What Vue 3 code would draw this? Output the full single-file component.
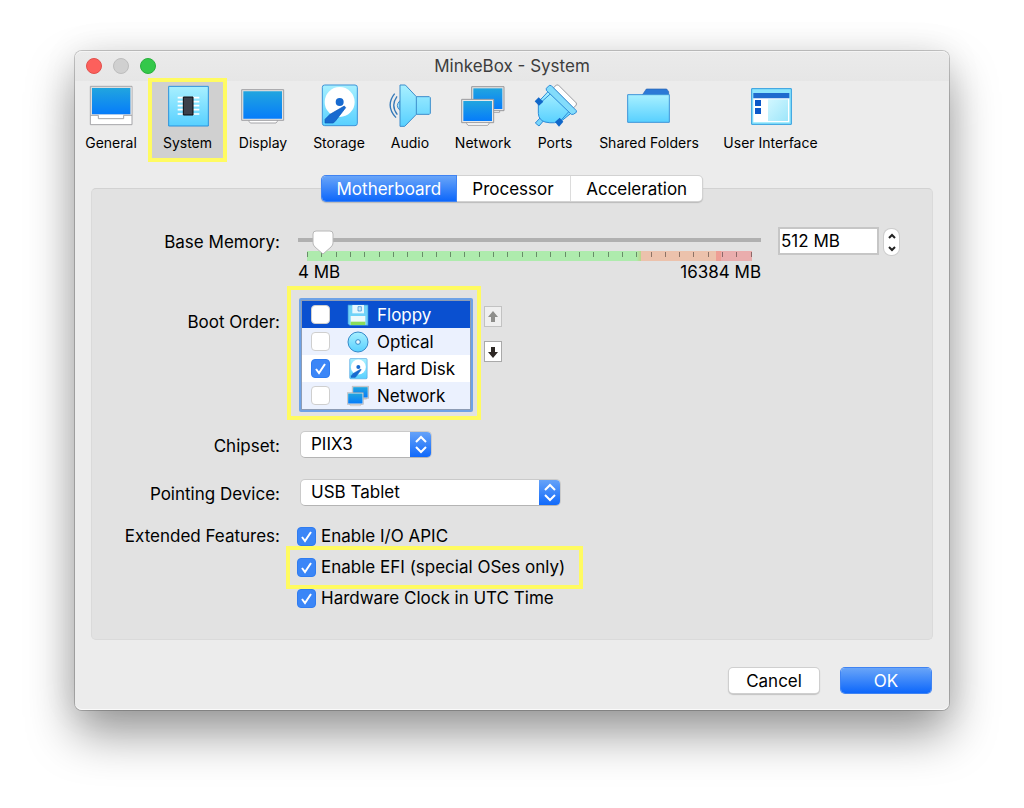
<script setup>
import { ref } from 'vue'

const sections = [
  { id: 'general', label: 'General' },
  { id: 'system', label: 'System' },
  { id: 'display', label: 'Display' },
  { id: 'storage', label: 'Storage' },
  { id: 'audio', label: 'Audio' },
  { id: 'network', label: 'Network' },
  { id: 'ports', label: 'Ports' },
  { id: 'folders', label: 'Shared Folders' },
  { id: 'interface', label: 'User Interface' },
]
const section = ref('system')

const tabs = ['Motherboard', 'Processor', 'Acceleration']
const tab = ref('Motherboard')

const memory = ref(512)
const bootOrder = ref([
  { id: 'floppy', label: 'Floppy', on: false },
  { id: 'optical', label: 'Optical', on: false },
  { id: 'storage', label: 'Hard Disk', on: true },
  { id: 'network', label: 'Network', on: false },
])
const selected = ref('floppy')
const chipset = ref('PIIX3')
const pointing = ref('USB Tablet')
const features = ref([
  { id: 'apic', label: 'Enable I/O APIC', on: true },
  { id: 'efi', label: 'Enable EFI (special OSes only)', on: true },
  { id: 'utc', label: 'Hardware Clock in UTC Time', on: true },
])
</script>

<template>
  <svg class="sprite" aria-hidden="true">
    <defs>
      <linearGradient id="screen" x1="0" y1="0" x2="0" y2="1">
        <stop offset="0" stop-color="#21a5df" /><stop offset="1" stop-color="#067cfa" />
      </linearGradient>
      <linearGradient id="ice" x1="0" y1="0" x2="0" y2="1">
        <stop offset="0" stop-color="#a8f0ff" /><stop offset="1" stop-color="#58d0ff" />
      </linearGradient>
      <linearGradient id="pale" x1="0" y1="0" x2="1" y2="1">
        <stop offset="0" stop-color="#d2f7ff" /><stop offset="1" stop-color="#9ee6fa" />
      </linearGradient>
    </defs>
    <symbol id="i-general" viewBox="0 0 132 132">
      <path d="M4 7H129V122H4Z" fill="#fff" stroke="#a4a4a8" stroke-width="3" />
      <path d="M6 9H127V92H6Z" fill="#dedede" />
      <path d="M9 12H124V91H9Z" fill="url(#screen)" />
      <path d="M4 94H28V104H104V94H129" fill="none" stroke="#a4a4a8" stroke-width="3" />
    </symbol>
    <symbol id="i-system" viewBox="0 0 132 132">
      <path d="M8 7H127V126H8Z" fill="url(#ice)" stroke="#2b92dc" stroke-width="3" />
      <path d="M35 41H100M35 53H100M35 65H100M35 77H100M35 90H100" stroke="#fff" stroke-width="5" />
      <path d="M52 39H81V93H52Z" fill="#3c414b" stroke="#090b10" stroke-width="3" />
    </symbol>
    <symbol id="i-display" viewBox="0 0 132 132">
      <path d="M24 106H109V112L105 117H28L24 112Z" fill="#fff" stroke="#a4a4a8" stroke-width="3" />
      <path d="M2 17H128V109H2Z" fill="#e2e2e2" stroke="#a0a0a4" stroke-width="3" />
      <path d="M7 22H123V104H7Z" fill="url(#screen)" />
    </symbol>
    <symbol id="i-storage" viewBox="0 0 132 132">
      <rect x="16" y="3" width="105" height="122" rx="7" fill="url(#ice)" stroke="#3c93d8" stroke-width="3" />
      <circle cx="68" cy="54" r="45" fill="#fff" />
      <circle cx="68" cy="54" r="12" fill="#176ad0" />
      <path d="M82 66L86 71L56 110L49 117H24V106L39 91Z" fill="#176ad0" stroke="#0e57b8" stroke-width="2" />
    </symbol>
    <symbol id="i-audio" viewBox="0 0 132 132">
      <path d="M20 29Q-9 65 24 101M27 37Q7 65 28 92" fill="none" stroke="#3579b8" stroke-width="4" />
      <path d="M36 50Q20 65 36 79Z" fill="#a6e6fb" stroke="#3b8bcd" stroke-width="3" />
      <path d="M36 3H52L85 38H124L127 41V88L124 91H85L50 127H36Z" fill="url(#ice)" stroke="#3c8dcc" stroke-width="3" />
      <path d="M85 38V91" stroke="#3c8dcc" stroke-width="3" />
    </symbol>
    <symbol id="i-network" viewBox="0 0 132 132">
      <path d="M60 78H116V85H60Z" fill="#fff" stroke="#a4a4a8" stroke-width="3" />
      <path d="M32 8H129V80H32Z" fill="#e2e2e2" stroke="#98989c" stroke-width="3" />
      <path d="M37 13H124V75H37Z" fill="url(#screen)" />
      <path d="M17 113H84V119L80 124H21L17 119Z" fill="#fff" stroke="#a4a4a8" stroke-width="3" />
      <path d="M2 46H98V116H2Z" fill="#e8e8e8" stroke="#98989c" stroke-width="3" />
      <path d="M7 51H93V111H7Z" fill="url(#screen)" />
    </symbol>
    <symbol id="i-ports" viewBox="0 0 132 132">
      <path d="M61 12L70 3H76L130 57V63L121 72Z" fill="#fff" stroke="#9a9ca0" stroke-width="3" />
      <path d="M22 101L31 111L18 126L7 117Z" fill="#7ad6fb" stroke="#2c8bd8" stroke-width="3" />
      <path d="M46 22L16 54V88Q17 108 36 114Q66 121 88 109L116 86Z" fill="url(#ice)" stroke="#2c8bd8" stroke-width="3" />
      <path d="M53 29L25 54M110 80L84 109" fill="none" stroke="#2c8bd8" stroke-width="3" />
      <path d="M5 52L17 40L31 53L18 65Z" fill="#1167c9" />
      <path d="M66 114L80 101L91 113L78 128Z" fill="#1167c9" />
      <path d="M40 13L49 4L55 5L130 80V85L121 91H115L40 19Z" fill="#83dcfb" stroke="#2c8bd8" stroke-width="3" />
    </symbol>
    <symbol id="i-folders" viewBox="0 0 132 132">
      <path d="M46 33L58 15H119L125 23V33Z" fill="#2c79d6" stroke="#2864b4" stroke-width="2" />
      <path d="M2 32H127V115H2Z" fill="url(#ice)" stroke="#3d95d9" stroke-width="3" />
    </symbol>
    <symbol id="i-interface" viewBox="0 0 132 132">
      <path d="M8 14H127V121H8Z" fill="#8ce6fd" stroke="#2b9cdf" stroke-width="3" />
      <path d="M13 42H121V115H13Z" fill="#fff" />
      <path d="M13 27H121V43H13Z" fill="#1f6bce" />
      <path d="M18 48H36V66H18ZM18 72H36V90H18Z" fill="#0b58c8" />
      <path d="M57 46H117V111H57Z" fill="url(#pale)" />
    </symbol>
    <symbol id="i-floppy" viewBox="0 0 66 66">
      <path d="M3 3H63V64H8L3 59Z" fill="#70d3f8" stroke="#3a8fd8" stroke-width="2" />
      <path d="M16 3H51V28H16Z" fill="#e6f7fd" />
      <path d="M33 8H43V21H33Z" fill="#c5e8fb" stroke="#3188d3" stroke-width="2" />
      <path d="M11 36H55V63H11Z" fill="#eef9fb" />
      <path d="M11 53H55V63H11Z" fill="#8ade5b" />
    </symbol>
    <symbol id="i-optical" viewBox="0 0 66 66">
      <circle cx="33" cy="33" r="30" fill="url(#ice)" stroke="#3589c9" stroke-width="3" />
      <circle cx="33" cy="33" r="7" fill="#eaf9ff" stroke="#3589c9" stroke-width="3" />
    </symbol>
  </svg>

  <main class="stage">
    <div class="window">
      <header class="titlebar">
        <div class="lights">
          <button class="light red" aria-label="Close"></button>
          <button class="light gray" aria-label="Minimize" disabled></button>
          <button class="light green" aria-label="Zoom"></button>
        </div>
        <h1>MinkeBox - System</h1>
      </header>

      <nav class="toolbar">
        <button
          v-for="s in sections"
          :key="s.id"
          class="tool"
          :class="[s.id, { active: section === s.id }]"
          @click="section = s.id"
        >
          <svg class="tool-icon" aria-hidden="true"><use :href="'#i-' + s.id" /></svg>
          <span>{{ s.label }}</span>
        </button>
      </nav>

      <div class="tabs" role="tablist">
        <button
          v-for="t in tabs"
          :key="t"
          class="tab"
          :class="{ active: tab === t }"
          role="tab"
          :aria-selected="tab === t"
          @click="tab = t"
        >{{ t }}</button>
      </div>

      <section class="panel">
        <div class="row memory">
          <label class="name" for="memory">Base Memory:</label>
          <div class="memory-controls">
            <div class="slider">
              <input id="memory" v-model.number="memory" type="range" min="4" max="16384" step="4" />
              <div class="scale"><i v-for="n in 32" :key="n"></i></div>
              <div class="limits"><span>4 MB</span><span>16384 MB</span></div>
            </div>
            <input class="amount" type="text" :value="memory + ' MB'" aria-label="Base memory amount" />
            <div class="stepper">
              <button aria-label="Increase" @click="memory += 4">
                <svg viewBox="0 0 10 6"><path d="M2 5L5 2L8 5" /></svg>
              </button>
              <button aria-label="Decrease" @click="memory -= 4">
                <svg viewBox="0 0 10 6"><path d="M2 1L5 4L8 1" /></svg>
              </button>
            </div>
          </div>
        </div>

        <div class="row boot">
          <span class="name">Boot Order:</span>
          <div class="boot-controls">
            <div class="boot-frame marked">
              <ul class="boot-list">
                <li v-for="b in bootOrder" :key="b.id" :class="{ selected: selected === b.id }">
                  <label>
                    <input v-model="b.on" type="checkbox" class="check" />
                    <svg class="boot-icon" aria-hidden="true"><use :href="'#i-' + b.id" /></svg>
                    <span>{{ b.label }}</span>
                  </label>
                </li>
              </ul>
            </div>
            <div class="movers">
              <button class="mover" aria-label="Move up" disabled>
                <svg viewBox="0 0 12 14"><path d="M6 1L11 7H8V12H4V7H1Z" /></svg>
              </button>
              <button class="mover" aria-label="Move down">
                <svg viewBox="0 0 12 14"><path d="M6 13L11 7H8V2H4V7H1Z" /></svg>
              </button>
            </div>
          </div>
        </div>

        <div class="row chipset">
          <label class="name" for="chipset">Chipset:</label>
          <div class="select short">
            <select id="chipset" v-model="chipset"><option>PIIX3</option><option>ICH9</option></select>
            <span class="cap"><svg viewBox="0 0 22 27"><path d="M6 11L11 6L16 11M6 16L11 21L16 16" /></svg></span>
          </div>
        </div>

        <div class="row pointing">
          <label class="name" for="pointing">Pointing Device:</label>
          <div class="select long">
            <select id="pointing" v-model="pointing"><option>USB Tablet</option><option>PS/2 Mouse</option></select>
            <span class="cap"><svg viewBox="0 0 22 27"><path d="M6 11L11 6L16 11M6 16L11 21L16 16" /></svg></span>
          </div>
        </div>

        <div class="row features">
          <span class="name">Extended Features:</span>
          <div class="feature-list">
            <label v-for="f in features" :key="f.id" class="feature" :class="{ marked: f.id === 'efi' }">
              <input v-model="f.on" type="checkbox" class="check" />
              <span>{{ f.label }}</span>
            </label>
          </div>
        </div>
      </section>

      <footer class="actions">
        <button class="action">Cancel</button>
        <button class="action primary">OK</button>
      </footer>
    </div>
  </main>
</template>

<style>
body {
  background: #fff;
}
</style>

<style scoped>
* {
  box-sizing: border-box;
}
.sprite {
  position: absolute;
  width: 0;
  height: 0;
}
.stage {
  padding: 51px 75px 98px;
  font-family: Inter, "Liberation Sans", sans-serif;
  font-size: 17px;
  line-height: 20px;
  color: #000;
}
button,
input,
select {
  font: inherit;
  color: inherit;
  margin: 0;
  padding: 0;
  border: 0;
  background: none;
}
.window {
  background: #ececec;
  border-radius: 7px;
  padding-bottom: 17px;
  box-shadow:
    inset 0 -1px 0 #fafafa,
    0 0 0 1px rgba(0, 0, 0, 0.2),
    0 24px 48px rgba(0, 0, 0, 0.4),
    0 0 36px rgba(0, 0, 0, 0.08);
}
.titlebar {
  display: grid;
  grid-template-columns: 1fr auto 1fr;
  align-items: center;
  height: 30px;
  padding: 0 11px;
  border-radius: 7px 7px 0 0;
  background: linear-gradient(#ebebeb, #e6e6e6);
  box-shadow: inset 0 1px 0 #f4f4f4;
}
.lights {
  display: flex;
  gap: 11px;
}
.light {
  width: 16px;
  height: 16px;
  border-radius: 50%;
}
.red {
  background: #fc605c;
  border: 1px solid #e2504c;
}
.gray {
  background: #d0d0d0;
  border: 1px solid #bdbdbd;
}
.green {
  background: #34c84a;
  border: 1px solid #28b03c;
}
h1 {
  margin: 0;
  font-size: 17px;
  font-weight: 400;
  color: #3d3d3d;
}
.toolbar {
  display: flex;
  gap: 5px;
  padding-top: 1px;
}
.tool {
  display: flex;
  flex-direction: column;
  align-items: center;
  gap: 7px;
  height: 76px;
  padding-top: 2px;
  font-size: 14px;
  line-height: 16px;
  white-space: nowrap;
}
.tool-icon {
  width: 44px;
  height: 44px;
}
.general,
.storage {
  width: 72px;
}
.system {
  width: 71px;
}
.display {
  width: 70px;
}
.audio {
  width: 60px;
}
.network {
  width: 76px;
}
.ports {
  width: 58px;
}
.folders {
  width: 120px;
}
.interface {
  width: 113px;
}
.tool.active {
  background: #d0d0d0;
  outline: 4px solid #fffb61;
}
.tabs {
  position: relative;
  display: flex;
  width: 380px;
  height: 25px;
  margin: 18px auto -13px;
  border-radius: 4px;
  background: #fff;
  box-shadow: 0 0 0 1px #d2d2d2, 0 1px 1px 1px #bbb;
}
.tab {
  flex: 115;
  border-right: 1px solid #dcdcdc;
}
.tab:first-child {
  flex: 134;
}
.tab:last-child {
  flex: 131;
  border-right: 0;
}
.tab.active {
  color: #fff;
  border: 0;
  border-radius: 4px 0 0 4px;
  background: linear-gradient(#69a5f8, #0d67fb);
  box-shadow: 0 0 0 1px #3f83f2;
}
.panel {
  margin: 0 16px;
  padding: 38px 32px 31px 0;
  border: 1px solid #dadada;
  border-top-color: #d2d2d2;
  border-radius: 5px;
  background: #e2e2e2;
}
.row {
  display: grid;
  grid-template-columns: 188px 1fr;
  column-gap: 18px;
  align-items: start;
}
.name {
  text-align: right;
  line-height: 30px;
}
.memory {
  margin-bottom: 15px;
}
.memory-controls {
  display: flex;
  align-items: flex-start;
}
.slider {
  flex: 1;
  margin-right: 17px;
  padding-top: 3px;
}
.slider input {
  position: relative;
  display: block;
  width: 100%;
  height: 25px;
  appearance: none;
  background: linear-gradient(#b0b0b0, #b0b0b0) 0 8px / 100% 4px no-repeat;
}
.slider input::-webkit-slider-thumb {
  appearance: none;
  width: 22px;
  height: 25px;
  background: url("data:image/svg+xml,%3Csvg xmlns='http://www.w3.org/2000/svg' width='22' height='25' viewBox='1 0 22 25'%3E%3Cpath d='M5 1H19Q22 1 22 4V13Q22 15 20 17L12 24L4 17Q2 15 2 13V4Q2 1 5 1Z' fill='white' stroke='%23b8b8b8'/%3E%3C/svg%3E");
}
.scale {
  display: flex;
  justify-content: space-between;
  height: 10px;
  margin: -4px 9px 0;
  padding: 1px 0 4px;
  background: linear-gradient(90deg, #aeebad 74%, #b8d78c 75%, #ecc2ac 75% 92%, #ee9e94 92% 93%, #eaadad 93%);
}
.scale i {
  width: 1px;
  background: rgba(0, 0, 0, 0.4);
}
.limits {
  display: flex;
  justify-content: space-between;
  line-height: 22px;
}
.amount {
  width: 101px;
  height: 28px;
  margin-right: 5px;
  padding: 0 1px 1px;
  border: 2px solid #c6c6c6;
  background: #fff;
}
.stepper {
  display: flex;
  flex-direction: column;
  width: 15px;
  height: 26px;
  margin-top: 2px;
  margin-right: 1px;
  border-radius: 7px;
  background: #fff;
  box-shadow: 0 0 0 1px #cdcdcd;
}
.stepper button {
  display: grid;
  place-items: center;
  flex: 1;
}
.stepper svg {
  width: 10px;
  height: 6px;
}
.stepper path {
  fill: none;
  stroke: #222;
  stroke-width: 2;
}
.boot {
  margin-bottom: 19px;
}
.boot .name {
  padding-top: 9px;
}
.boot-controls {
  display: flex;
  gap: 11px;
  padding-left: 1px;
}
.marked {
  position: relative;
}
.marked::after {
  content: "";
  position: absolute;
  inset: -12px -8px -8px -12px;
  border: 4px solid #fffb61;
  pointer-events: none;
}
.boot-list {
  width: 174px;
  margin: 0;
  padding: 1px;
  border: 2px solid #6ea2e6;
  border-radius: 2px;
  background: #8d9cb4;
  list-style: none;
}
.boot-list li {
  background: #ebf1fe;
}
.boot-list li:nth-child(odd) {
  background: #fff;
}
.boot-list li.selected {
  background: #0a50d0;
  color: #fff;
}
.boot-list label {
  display: flex;
  align-items: center;
  height: 27px;
  padding-left: 9px;
}
.boot-icon {
  width: 22px;
  height: 22px;
  margin: 0 8px 0 17px;
}
.check {
  flex: none;
  width: 19px;
  height: 19px;
  appearance: none;
  border: 1px solid #cfcfcf;
  border-radius: 4px;
  background: #fff;
}
.check:checked {
  border-color: #2f7cf0;
  background: #3b86f7 url("data:image/svg+xml,%3Csvg xmlns='http://www.w3.org/2000/svg' width='17' height='17'%3E%3Cpath d='M4 9L7 13L13 4' fill='none' stroke='white' stroke-width='2'/%3E%3C/svg%3E") center no-repeat;
}
.movers {
  display: flex;
  flex-direction: column;
  gap: 14px;
  padding-top: 8px;
}
.mover {
  display: grid;
  place-items: center;
  width: 18px;
  height: 21px;
  border: 1px solid #a9a9a9;
  background: #fff;
}
.mover svg {
  width: 12px;
  height: 14px;
  fill: #2e2926;
}
.mover:disabled {
  border-color: #c2c2c2;
  background: #efefef;
}
.mover:disabled svg {
  fill: #8e8e8b;
}
.select {
  position: relative;
  height: 27px;
  margin-left: 2px;
  border-radius: 5px;
  overflow: hidden;
  background: #fff;
  border: 1px solid #cacaca;
  border-bottom-color: #b4b4b4;
}
.short {
  width: 132px;
}
.long {
  width: 261px;
}
.select select {
  width: 100%;
  height: 25px;
  padding: 0 0 2px 10px;
  appearance: none;
}
.cap {
  position: absolute;
  inset: -1px -1px -1px auto;
  width: 22px;
  background: linear-gradient(#69a5f8, #0d67fb);
  pointer-events: none;
}
.cap svg {
  display: block;
  width: 22px;
  height: 27px;
  fill: none;
  stroke: #fff;
  stroke-width: 2;
}
.chipset {
  margin-bottom: 18px;
}
.pointing {
  margin-bottom: 12px;
}
.feature-list {
  display: grid;
  justify-items: start;
  gap: 11px;
  padding-top: 5px;
  margin-left: -1px;
}
.feature {
  display: flex;
  align-items: center;
  gap: 5px;
  height: 20px;
}
.feature.marked::after {
  inset: -11px -18px -12px -11px;
}
.actions {
  display: flex;
  justify-content: flex-end;
  gap: 22px;
  margin-top: 28px;
  padding-right: 18px;
}
.action {
  width: 90px;
  height: 25px;
  border-radius: 4px;
  background: #fff;
  box-shadow: 0 0 0 1px #cfcfcf, 0 1px 1px 1px #c4c4c4;
}
.action.primary {
  color: #fff;
  background: linear-gradient(#69a5f8, #0d67fb);
  box-shadow: 0 0 0 1px #3f83f2;
}
</style>
